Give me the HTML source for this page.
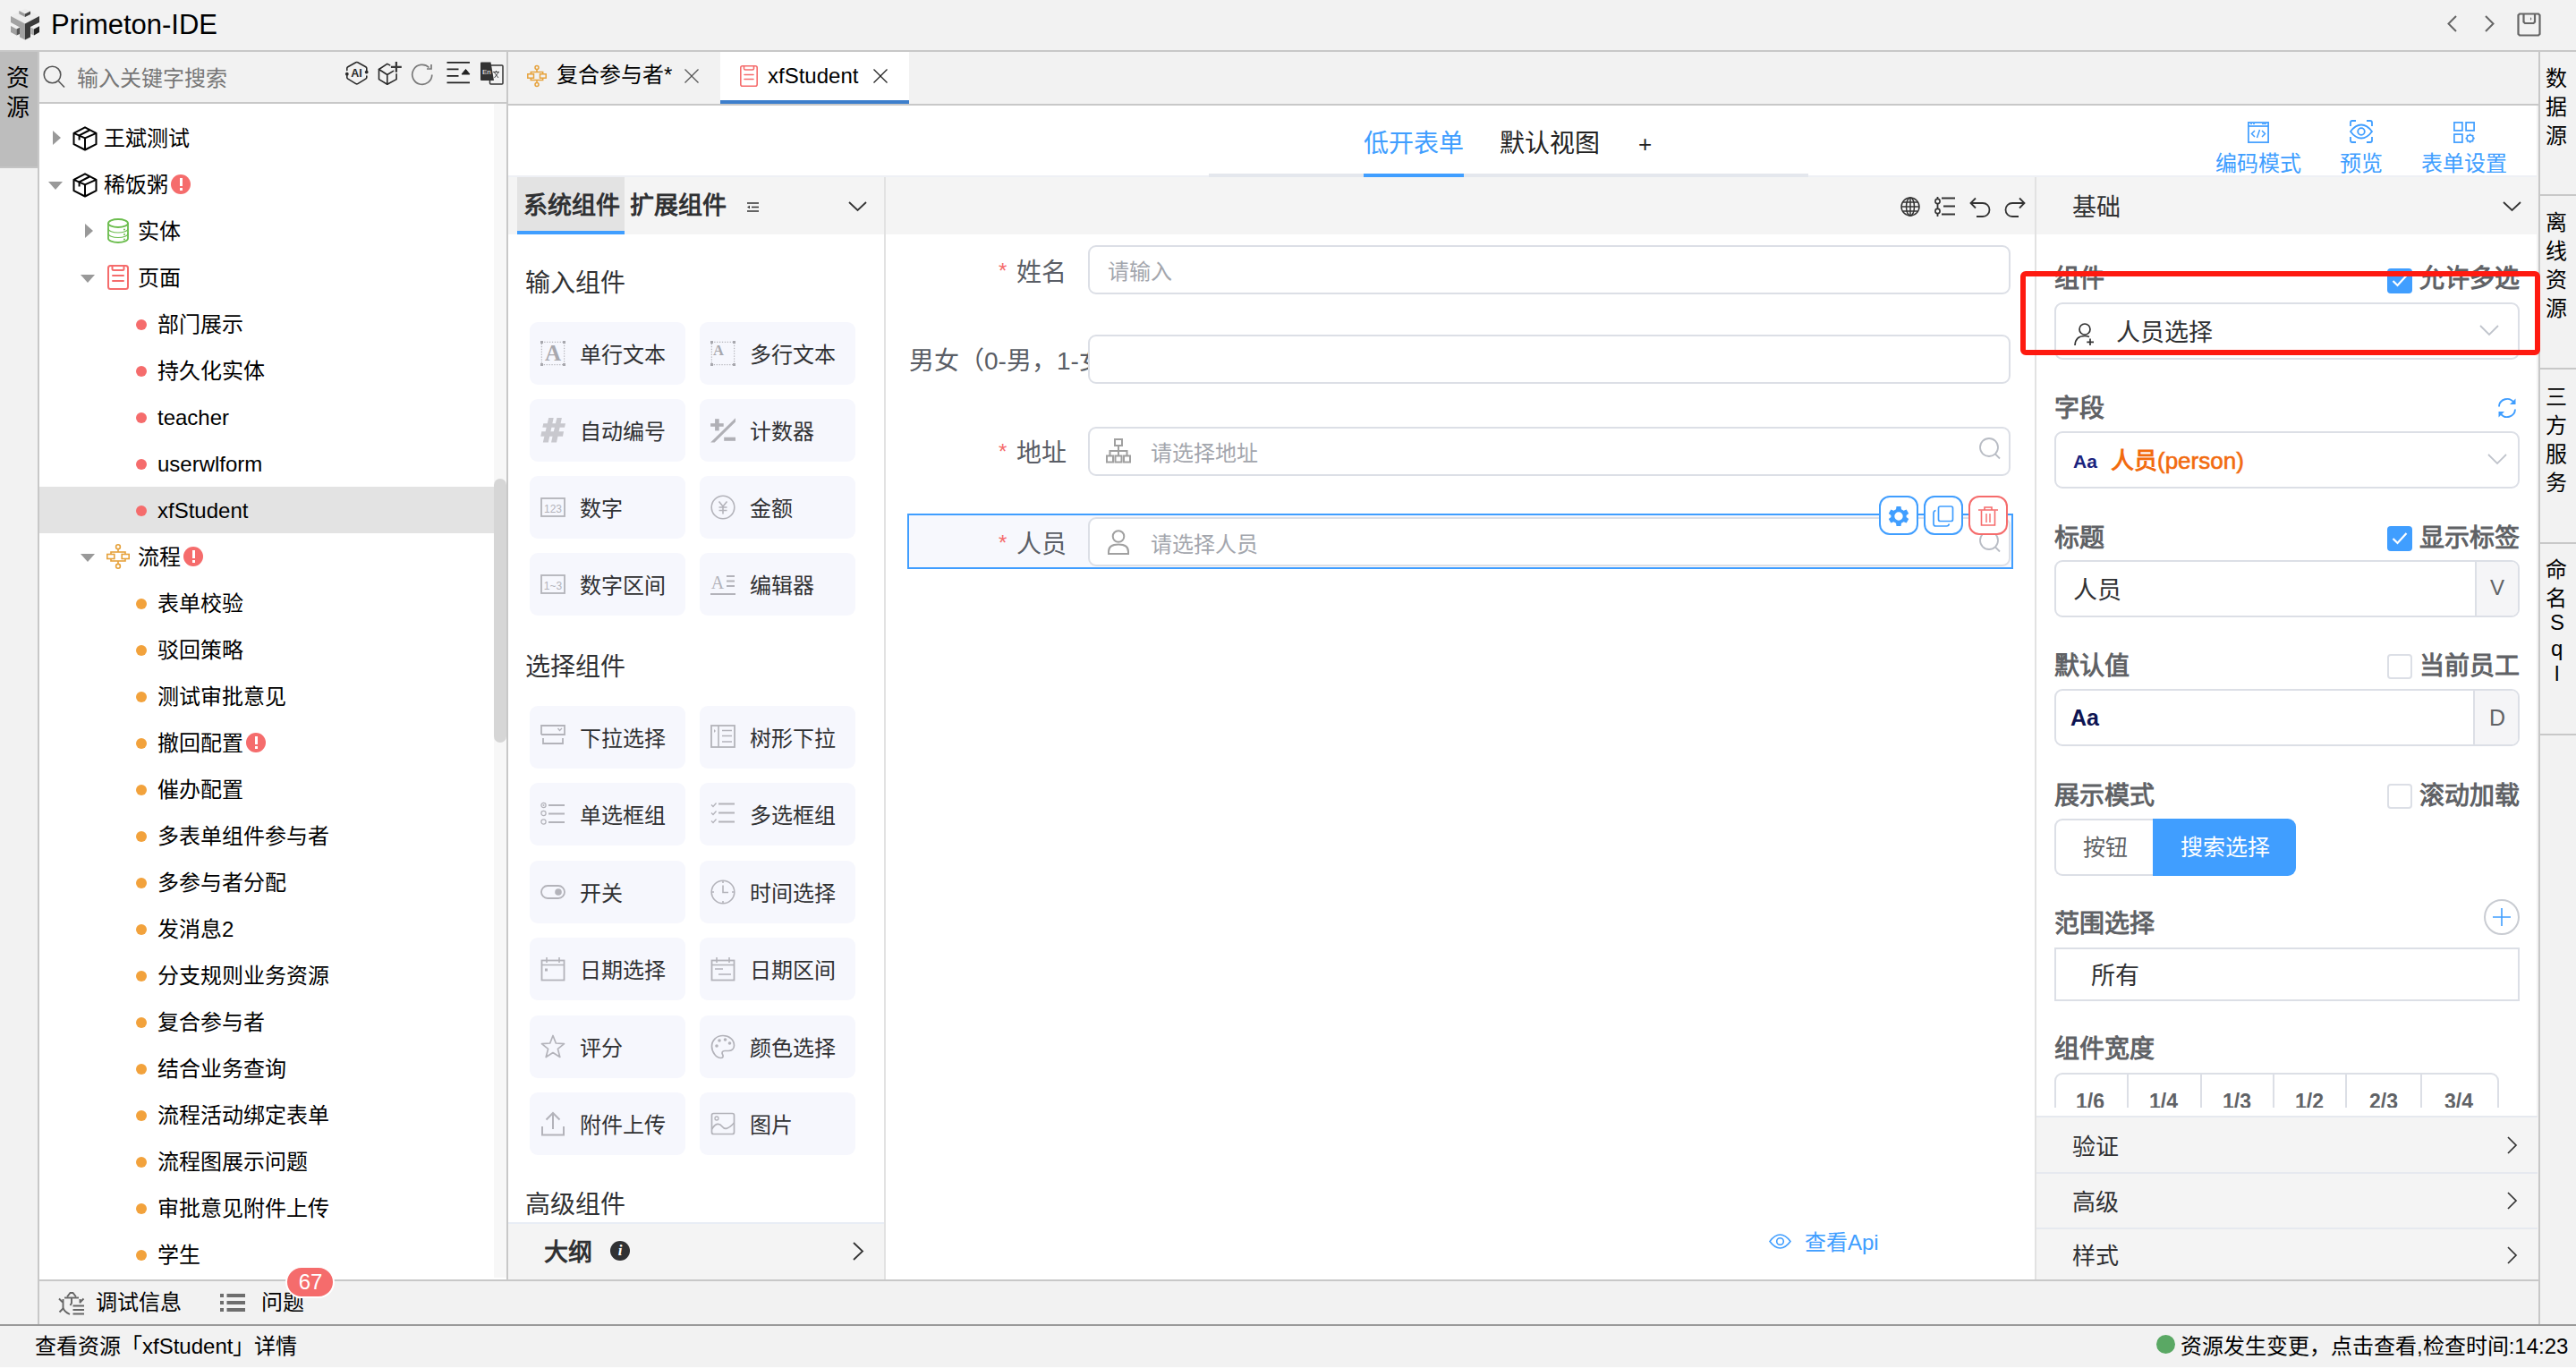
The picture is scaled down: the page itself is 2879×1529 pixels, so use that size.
<!DOCTYPE html>
<html lang="zh-CN"><head><meta charset="utf-8">
<style>
*{box-sizing:border-box;margin:0;padding:0}
html,body{width:2879px;height:1529px;overflow:hidden}
body{background:#f2f2f2;font-family:"Liberation Sans",sans-serif;position:relative;color:#000;font-size:24px}
.a{position:absolute}
.t{position:absolute;white-space:nowrap;line-height:1}
svg{position:absolute;overflow:visible}
</style></head><body>

<!-- ===== TITLE BAR ===== -->
<div class="a" style="left:0;top:0;width:2879px;height:56px;background:#f2f2f2"></div>
<div class="a" style="left:0;top:56px;width:2879px;height:2px;background:#c8c8c8"></div>

<!-- ===== LEFT STRIP ===== -->
<div class="a" style="left:0;top:58px;width:42px;height:1422px;background:#f2f2f2"></div>
<div class="a" style="left:0;top:58px;width:42px;height:128px;background:#bdbdbd"></div>
<div class="a" style="left:0;top:186px;width:42px;height:2px;background:#c4c4c4"></div>
<div class="a" style="left:42px;top:58px;width:2px;height:1422px;background:#c8c8c8"></div>

<!-- ===== LEFT PANEL ===== -->
<div class="a" style="left:44px;top:58px;width:522px;height:56px;background:#f2f2f2"></div>
<div class="a" style="left:44px;top:114px;width:522px;height:2px;background:#c8c8c8"></div>
<div class="a" style="left:44px;top:116px;width:522px;height:1314px;background:#fff"></div>
<div class="a" style="left:552px;top:116px;width:14px;height:1312px;background:#f7f7f7"></div>
<div class="a" style="left:552px;top:535px;width:14px;height:295px;background:#d6d6d6;border-radius:7px"></div>
<div class="a" style="left:566px;top:58px;width:2px;height:1372px;background:#c8c8c8"></div>

<!-- ===== EDITOR ===== -->
<div class="a" style="left:568px;top:58px;width:2269px;height:58px;background:#f2f2f2"></div>
<div class="a" style="left:568px;top:116px;width:2269px;height:2px;background:#c8c8c8"></div>
<div class="a" style="left:568px;top:118px;width:2267px;height:1312px;background:#fff"></div>

<!-- ===== RIGHT STRIP ===== -->
<div class="a" style="left:2837px;top:58px;width:2px;height:1422px;background:#c8c8c8"></div>
<div class="a" style="left:2839px;top:58px;width:40px;height:1422px;background:#f2f2f2"></div>

<!-- title content -->
<svg style="left:8px;top:5px" width="42" height="45" viewBox="0 0 42 45">
<polygon points="4,13 20,4.5 36,13 20,21.5" fill="#ededed"/>
<polygon points="13.3,7 20,10.5 20,14 13.3,10.5" fill="#9c9c9c"/>
<polygon points="20,10.5 26,7.5 26,11 20,14" fill="#444"/>
<polygon points="4,13 20,21.5 20,39.5 14,36.5 14,25.5 4,20" fill="#a2a2a2"/>
<polygon points="20,21.5 36,13 36,20 26,25 26,36.5 20,39.5" fill="#3b3b3b"/>
<polygon points="4,24 10.5,27.5 10.5,34.5 4,31" fill="#a0a0a0"/>
<polygon points="10.5,27.5 14,25.8 14,33 10.5,34.5" fill="#555"/>
<polygon points="26.5,25.5 30,27.5 30,34.5 26.5,33" fill="#aaa"/>
<polygon points="30,27.5 36,24.3 36,31 30,34.5" fill="#242424"/>
</svg>
<div class="t" style="left:57px;top:12px;font-size:31px;line-height:31px;color:#000">Primeton-IDE</div>
<svg style="left:2735px;top:17px" width="11" height="19"><path d="M10 1L1.5 9.5L10 18" fill="none" stroke="#666" stroke-width="2"/></svg>
<svg style="left:2777px;top:17px" width="11" height="19"><path d="M1 1L9.5 9.5L1 18" fill="none" stroke="#666" stroke-width="2"/></svg>
<svg style="left:2813px;top:14px" width="27" height="27" viewBox="0 0 27 27"><g fill="none" stroke="#666" stroke-width="2.2"><path d="M3 1.5H24L25.5 3V24L24 25.5H3L1.5 24V3Z"/><path d="M7.5 1.5V10.5L9 12H18.5L20 10.5V1.5"/></g><path d="M15 5L16.5 7L15 9Z" fill="#666"/></svg>

<!-- left strip -->
<div class="t" style="left:7px;top:71px;font-size:26px;line-height:33px;width:26px;white-space:normal;color:#000">资源</div>

<!-- search -->
<svg style="left:48px;top:73px" width="25" height="26" viewBox="0 0 25 26"><g fill="none" stroke="#555" stroke-width="1.6"><circle cx="10.5" cy="10.5" r="9.3"/><path d="M17.5 17.8L24 24.5"/></g></svg>
<div class="t" style="left:86px;top:60px;line-height:56px;font-size:24px;color:#777">输入关键字搜索</div>
<!-- AI -->
<svg style="left:386px;top:69px" width="26" height="26" viewBox="0 0 26 26"><g fill="none" stroke="#2a2a2a" stroke-width="1.6" stroke-linejoin="round" stroke-linecap="round"><path d="M1.8 9.6V7.3Q1.8 6.3 2.8 5.7L11.8 0.8Q12.8 0.3 13.8 0.8L22.8 5.7Q23.8 6.3 23.8 7.3V11.6"/><path d="M1.8 13.7V17.5Q1.8 18.5 2.8 19.1L11.8 24.6Q12.8 25.2 13.8 24.6L22.8 19.1Q23.8 18.5 23.8 17.5V16"/></g><circle cx="1.8" cy="13.7" r="1.9" fill="#2a2a2a"/><circle cx="23.7" cy="11.6" r="1.9" fill="#2a2a2a"/><text x="12.6" y="16.9" font-size="12.5" font-weight="700" text-anchor="middle" fill="#2a2a2a" font-family="Liberation Sans">AI</text></svg>
<!-- cube+ -->
<svg style="left:423px;top:69px" width="27" height="27" viewBox="0 0 27 27"><g fill="none" stroke="#2a2a2a" stroke-width="1.6" stroke-linejoin="round" stroke-linecap="round"><path d="M12.7 3.9L9.8 2.4L0.5 8.5V19.6L9.8 25.3L20.1 19.6V13.7"/><path d="M0.5 8.5L9.8 14.5L16.6 10.4M9.8 14.5V25.3"/></g><path d="M19.9 0V11.8M13.9 5.9H25.8" stroke="#3a3a3a" stroke-width="2.3"/></svg>
<!-- refresh -->
<svg style="left:460px;top:71px" width="24" height="25" viewBox="0 0 24 25"><g fill="none" stroke="#7a7a7a" stroke-width="1.7"><path d="M22.8 12.5A11 11 0 1 1 19.5 4.5"/><path d="M22 1V6H17"/></g></svg>
<!-- collapse -->
<svg style="left:499px;top:69px" width="27" height="26" viewBox="0 0 27 26"><g stroke="#222" stroke-width="1.8"><path d="M0.5 0.8H26M0.5 8.3H13.5M0.5 15.8H13.5M0.5 23.3H26"/></g><path d="M17 14H26L21.5 8.5Z" fill="#222" stroke="#222" stroke-width="1" stroke-linejoin="round"/></svg>
<!-- En 文 -->
<svg style="left:536px;top:69px" width="27" height="27" viewBox="0 0 27 27"><rect x="11.5" y="4" width="14.5" height="21" rx="1" fill="none" stroke="#333" stroke-width="1.5"/><path d="M1 1.5Q1 0.5 2 0.5H12.5L16 21H2Q1 21 1 20Z" fill="#333"/><text x="3" y="14" font-size="8" fill="#fff" font-family="Liberation Sans">En</text><path d="M15 11.5H22M18.5 10V11.5M16.5 12L21 18M21 12L16.5 18" stroke="#444" stroke-width="1" fill="none"/></svg>

<svg style="left:59px;top:146px" width="9" height="16"><path d="M0 0L9 8L0 16Z" fill="#999"/></svg>
<svg style="left:82px;top:141px" width="26" height="28" viewBox="0 0 26 28"><g fill="none" stroke="#000" stroke-width="2" stroke-linejoin="round"><path d="M13 1.3L25.5 7.8V20.2L13 26.5L0.5 20.2V7.8Z"/><path d="M0.5 7.8L13 13.4L25.5 7.8M13 13.4V26.5"/><path d="M6.6 15.5V10.3L18 4.5"/></g></svg>
<div class="t" style="left:116px;top:129px;line-height:52px;font-size:24px">王斌测试</div>
<svg style="left:54px;top:203px" width="16" height="9"><path d="M0 0L16 0L8 9Z" fill="#999"/></svg>
<svg style="left:82px;top:193px" width="26" height="28" viewBox="0 0 26 28"><g fill="none" stroke="#000" stroke-width="2" stroke-linejoin="round"><path d="M13 1.3L25.5 7.8V20.2L13 26.5L0.5 20.2V7.8Z"/><path d="M0.5 7.8L13 13.4L25.5 7.8M13 13.4V26.5"/><path d="M6.6 15.5V10.3L18 4.5"/></g></svg>
<div class="t" style="left:116px;top:181px;line-height:52px;font-size:24px">稀饭粥</div>
<div class="a" style="left:191px;top:195px;width:22px;height:22px;border-radius:11px;background:#f56c6c"></div><div class="a" style="left:200.5px;top:199px;width:3px;height:9px;background:#fff"></div><div class="a" style="left:200.5px;top:210px;width:3px;height:3px;background:#fff"></div>
<svg style="left:95px;top:250px" width="9" height="16"><path d="M0 0L9 8L0 16Z" fill="#999"/></svg>
<svg style="left:120px;top:244px" width="24" height="28" viewBox="0 0 24 28"><g fill="none" stroke="#6cbd4e" stroke-width="1.8"><ellipse cx="12" cy="5.5" rx="11" ry="4.5"/><path d="M1 5.5V22.5C1 25 6 27 12 27S23 25 23 22.5V5.5"/><path d="M1 11.5C1 14 6 16 12 16S23 14 23 11.5" stroke-width="1.2"/><path d="M1 17C1 19.5 6 21.5 12 21.5S23 19.5 23 17" stroke-width="1.2"/></g><g fill="#6cbd4e"><circle cx="19" cy="12.5" r="1"/><circle cx="19" cy="18" r="1"/><circle cx="19" cy="23.5" r="1"/></g></svg>
<div class="t" style="left:154px;top:233px;line-height:52px;font-size:24px">实体</div>
<svg style="left:90px;top:307px" width="16" height="9"><path d="M0 0L16 0L8 9Z" fill="#999"/></svg>
<svg style="left:120px;top:296px" width="24" height="28" viewBox="0 0 24 28"><g fill="none" stroke="#f56c6c" stroke-width="2" stroke-linecap="round"><rect x="1" y="1" width="22" height="26" rx="2.5"/><path d="M5.5 1.5V4.5Q5.5 6 7 6H17Q18.5 6 18.5 4.5V1.5"/><path d="M6 12H18M6 18H18"/></g></svg>
<div class="t" style="left:154px;top:285px;line-height:52px;font-size:24px">页面</div>
<div class="a" style="left:152px;top:357px;width:12px;height:12px;border-radius:6px;background:#f56c6c"></div>
<div class="t" style="left:176px;top:337px;line-height:52px;font-size:24px">部门展示</div>
<div class="a" style="left:152px;top:409px;width:12px;height:12px;border-radius:6px;background:#f56c6c"></div>
<div class="t" style="left:176px;top:389px;line-height:52px;font-size:24px">持久化实体</div>
<div class="a" style="left:152px;top:461px;width:12px;height:12px;border-radius:6px;background:#f56c6c"></div>
<div class="t" style="left:176px;top:441px;line-height:52px;font-size:24px">teacher</div>
<div class="a" style="left:152px;top:513px;width:12px;height:12px;border-radius:6px;background:#f56c6c"></div>
<div class="t" style="left:176px;top:493px;line-height:52px;font-size:24px">userwlform</div>
<div class="a" style="left:44px;top:544px;width:508px;height:52px;background:#e3e3e3"></div>
<div class="a" style="left:152px;top:565px;width:12px;height:12px;border-radius:6px;background:#f56c6c"></div>
<div class="t" style="left:176px;top:545px;line-height:52px;font-size:24px">xfStudent</div>
<svg style="left:90px;top:619px" width="16" height="9"><path d="M0 0L16 0L8 9Z" fill="#999"/></svg>
<svg style="left:119px;top:608px" width="26" height="28" viewBox="0 0 26 28"><g fill="none" stroke="#e6a23c" stroke-width="1.6"><circle cx="13" cy="3.2" r="2.4"/><circle cx="13" cy="24.8" r="2.4"/><path d="M13 5.6V9M13 19V22.4"/><rect x="5" y="9" width="16" height="10"/><rect x="0.8" y="11.5" width="8" height="5" fill="#fff"/><rect x="17.2" y="11.5" width="8" height="5" fill="#fff"/></g></svg>
<div class="t" style="left:154px;top:597px;line-height:52px;font-size:24px">流程</div>
<div class="a" style="left:205px;top:611px;width:22px;height:22px;border-radius:11px;background:#f56c6c"></div><div class="a" style="left:214.5px;top:615px;width:3px;height:9px;background:#fff"></div><div class="a" style="left:214.5px;top:626px;width:3px;height:3px;background:#fff"></div>
<div class="a" style="left:152px;top:669px;width:12px;height:12px;border-radius:6px;background:#f2a23c"></div>
<div class="t" style="left:176px;top:649px;line-height:52px;font-size:24px">表单校验</div>
<div class="a" style="left:152px;top:721px;width:12px;height:12px;border-radius:6px;background:#f2a23c"></div>
<div class="t" style="left:176px;top:701px;line-height:52px;font-size:24px">驳回策略</div>
<div class="a" style="left:152px;top:773px;width:12px;height:12px;border-radius:6px;background:#f2a23c"></div>
<div class="t" style="left:176px;top:753px;line-height:52px;font-size:24px">测试审批意见</div>
<div class="a" style="left:152px;top:825px;width:12px;height:12px;border-radius:6px;background:#f2a23c"></div>
<div class="t" style="left:176px;top:805px;line-height:52px;font-size:24px">撤回配置</div>
<div class="a" style="left:275px;top:819px;width:22px;height:22px;border-radius:11px;background:#f56c6c"></div><div class="a" style="left:284.5px;top:823px;width:3px;height:9px;background:#fff"></div><div class="a" style="left:284.5px;top:834px;width:3px;height:3px;background:#fff"></div>
<div class="a" style="left:152px;top:877px;width:12px;height:12px;border-radius:6px;background:#f2a23c"></div>
<div class="t" style="left:176px;top:857px;line-height:52px;font-size:24px">催办配置</div>
<div class="a" style="left:152px;top:929px;width:12px;height:12px;border-radius:6px;background:#f2a23c"></div>
<div class="t" style="left:176px;top:909px;line-height:52px;font-size:24px">多表单组件参与者</div>
<div class="a" style="left:152px;top:981px;width:12px;height:12px;border-radius:6px;background:#f2a23c"></div>
<div class="t" style="left:176px;top:961px;line-height:52px;font-size:24px">多参与者分配</div>
<div class="a" style="left:152px;top:1033px;width:12px;height:12px;border-radius:6px;background:#f2a23c"></div>
<div class="t" style="left:176px;top:1013px;line-height:52px;font-size:24px">发消息2</div>
<div class="a" style="left:152px;top:1085px;width:12px;height:12px;border-radius:6px;background:#f2a23c"></div>
<div class="t" style="left:176px;top:1065px;line-height:52px;font-size:24px">分支规则业务资源</div>
<div class="a" style="left:152px;top:1137px;width:12px;height:12px;border-radius:6px;background:#f2a23c"></div>
<div class="t" style="left:176px;top:1117px;line-height:52px;font-size:24px">复合参与者</div>
<div class="a" style="left:152px;top:1189px;width:12px;height:12px;border-radius:6px;background:#f2a23c"></div>
<div class="t" style="left:176px;top:1169px;line-height:52px;font-size:24px">结合业务查询</div>
<div class="a" style="left:152px;top:1241px;width:12px;height:12px;border-radius:6px;background:#f2a23c"></div>
<div class="t" style="left:176px;top:1221px;line-height:52px;font-size:24px">流程活动绑定表单</div>
<div class="a" style="left:152px;top:1293px;width:12px;height:12px;border-radius:6px;background:#f2a23c"></div>
<div class="t" style="left:176px;top:1273px;line-height:52px;font-size:24px">流程图展示问题</div>
<div class="a" style="left:152px;top:1345px;width:12px;height:12px;border-radius:6px;background:#f2a23c"></div>
<div class="t" style="left:176px;top:1325px;line-height:52px;font-size:24px">审批意见附件上传</div>
<div class="a" style="left:152px;top:1397px;width:12px;height:12px;border-radius:6px;background:#f2a23c"></div>
<div class="t" style="left:176px;top:1377px;line-height:52px;font-size:24px">学生</div>
<!-- ===== EDITOR TABS ===== -->
<svg style="left:589px;top:73px" width="22" height="24" viewBox="0 0 22 24"><g fill="none" stroke="#e6a23c" stroke-width="1.5"><circle cx="11" cy="2.6" r="2"/><circle cx="11" cy="21.4" r="2"/><path d="M11 4.6V7.5M11 16.5V19.4"/><rect x="4.3" y="7.5" width="13.4" height="9"/><rect x="0.8" y="9.8" width="6.7" height="4.4" fill="#f2f2f2"/><rect x="14.5" y="9.8" width="6.7" height="4.4" fill="#f2f2f2"/></g></svg>
<div class="t" style="left:622px;top:55px;line-height:58px;font-size:24px">复合参与者*</div>
<svg style="left:765px;top:77px" width="16" height="16"><path d="M0.5 0.5L15.5 15.5M15.5 0.5L0.5 15.5" stroke="#555" stroke-width="1.3"/></svg>
<div class="a" style="left:805px;top:58px;width:211px;height:58px;background:#fff"></div>
<div class="a" style="left:805px;top:112px;width:211px;height:4px;background:#3d7fcc"></div>
<svg style="left:827px;top:73px" width="20" height="24" viewBox="0 0 20 24"><g fill="none" stroke="#f56c6c" stroke-width="1.6" stroke-linecap="round"><rect x="0.8" y="0.8" width="18.4" height="22.4" rx="2"/><path d="M4.5 1V3.5Q4.5 5 6 5H14Q15.5 5 15.5 3.5V1"/><path d="M5 10.5H15M5 15.5H15"/></g></svg>
<div class="t" style="left:858px;top:57px;line-height:56px;font-size:24px">xfStudent</div>
<svg style="left:976px;top:77px" width="16" height="16"><path d="M0.5 0.5L15.5 15.5M15.5 0.5L0.5 15.5" stroke="#222" stroke-width="1.3"/></svg>

<!-- ===== DESIGNER TOP ===== -->
<div class="t" style="left:1524px;top:141px;font-size:28px;line-height:40px;color:#409eff">低开表单</div>
<div class="t" style="left:1676px;top:141px;font-size:28px;line-height:40px;color:#222">默认视图</div>
<div class="t" style="left:1831px;top:143px;font-size:26px;line-height:36px;color:#222">+</div>

<!-- toolbar right -->
<svg style="left:2512px;top:136px" width="24" height="24" viewBox="0 0 24 24"><g fill="none" stroke="#409eff" stroke-width="1.7"><rect x="0.9" y="0.9" width="22.2" height="22.2"/><path d="M1 5H23"/><path d="M8 10L4.5 13.5L8 17M16 10L19.5 13.5L16 17M13.5 9L10.5 18" stroke-width="1.5"/></g><path d="M3 2.5H5M6 2.5H8M16 2.5H21" stroke="#409eff" stroke-width="1.2"/></svg>
<div class="t" style="left:2476px;top:169px;font-size:24px;line-height:28px;color:#409eff">编码模式</div>
<svg style="left:2626px;top:134px" width="26" height="26" viewBox="0 0 26 26"><g fill="none" stroke="#409eff" stroke-width="1.8"><path d="M1 7V3Q1 1 3 1H7M19 1H23Q25 1 25 3V7M25 19V23Q25 25 23 25H19M7 25H3Q1 25 1 23V19"/><path d="M1 13Q6.5 5.5 13 5.5T25 13Q19.5 20.5 13 20.5T1 13Z"/><circle cx="13" cy="13" r="3.8"/></g></svg>
<div class="t" style="left:2615px;top:169px;font-size:24px;line-height:28px;color:#409eff">预览</div>
<svg style="left:2742px;top:136px" width="24" height="24" viewBox="0 0 24 24"><g fill="none" stroke="#409eff" stroke-width="1.7"><rect x="0.9" y="0.9" width="9" height="9"/><rect x="14.1" y="0.9" width="9" height="9"/><rect x="0.9" y="14.1" width="9" height="9"/><circle cx="18.6" cy="18.6" r="3.6"/></g><path d="M18.6 13.5V15M18.6 22.2V23.7M13.5 18.6H15M22.2 18.6H23.7M15 15L16 16M21.2 21.2L22.2 22.2M15 22.2L16 21.2M21.2 16L22.2 15" stroke="#409eff" stroke-width="1.6"/></svg>
<div class="t" style="left:2706px;top:169px;font-size:24px;line-height:28px;color:#409eff">表单设置</div>

<!-- ===== COMPONENT PANEL HEADER ===== -->
<div class="a" style="left:568px;top:198px;width:2267px;height:64px;background:#f4f4f4"></div>
<div class="a" style="left:568px;top:196px;width:2267px;height:2px;background:#eef0f5"></div>
<div class="a" style="left:1351px;top:194px;width:670px;height:4px;background:#e4e7ed"></div>
<div class="a" style="left:1524px;top:194px;width:112px;height:4px;background:#409eff"></div>
<div class="a" style="left:578px;top:198px;width:120px;height:60px;background:#e3e3e3"></div>
<div class="a" style="left:578px;top:258px;width:120px;height:4px;background:#409eff"></div>
<div class="t" style="left:585px;top:214px;font-size:27px;line-height:32px;font-weight:700;color:#303133">系统组件</div>
<div class="t" style="left:704px;top:214px;font-size:27px;line-height:32px;font-weight:700;color:#303133">扩展组件</div>
<svg style="left:835px;top:226px" width="13" height="11" viewBox="0 0 13 11"><path d="M0 1H13M5 5.5H13M0 10H13" stroke="#333" stroke-width="1.6"/><path d="M0 5.5L3 3.8V7.2Z" fill="#333"/></svg>
<svg style="left:948px;top:225px" width="21" height="11"><path d="M1 1L10.5 10L20 1" fill="none" stroke="#333" stroke-width="1.8"/></svg>
<div class="a" style="left:988px;top:198px;width:2px;height:1232px;background:#e2e2e2"></div>

<!-- canvas toolbar -->
<svg style="left:2124px;top:220px" width="22" height="22" viewBox="0 0 22 22"><g fill="none" stroke="#333" stroke-width="1.5"><circle cx="11" cy="11" r="10"/><ellipse cx="11" cy="11" rx="4.5" ry="10"/><path d="M11 1V21M1 11H21M2.5 6H19.5M2.5 16H19.5"/></g></svg>
<svg style="left:2162px;top:219px" width="24" height="24" viewBox="0 0 24 24"><g fill="none" stroke="#333" stroke-width="1.8"><path d="M8 2.5H23M10 11.5H23M8 20.5H23"/><path d="M3.5 1V23"/></g><circle cx="3.5" cy="6" r="2.6" fill="#fff" stroke="#333" stroke-width="1.6"/><circle cx="3.5" cy="17" r="2.6" fill="#fff" stroke="#333" stroke-width="1.6"/></svg>
<svg style="left:2201px;top:219px" width="24" height="24" viewBox="0 0 24 24"><g fill="none" stroke="#333" stroke-width="1.8"><path d="M2 8H15A7.5 7.5 0 0 1 15 23H8"/><path d="M7 2.5L1.5 8L7 13.5"/></g></svg>
<svg style="left:2240px;top:219px" width="24" height="24" viewBox="0 0 24 24"><g fill="none" stroke="#333" stroke-width="1.8"><path d="M22 8H9A7.5 7.5 0 0 0 9 23H16"/><path d="M17 2.5L22.5 8L17 13.5"/></g></svg>
<div class="a" style="left:2274px;top:198px;width:2px;height:1232px;background:#e2e2e2"></div>

<!-- properties header -->
<div class="t" style="left:2316px;top:216px;font-size:27px;line-height:32px;color:#303133">基础</div>
<svg style="left:2797px;top:225px" width="21" height="11"><path d="M1 1L10.5 10L20 1" fill="none" stroke="#333" stroke-width="1.8"/></svg>

<!-- ===== COMPONENT PANEL CONTENT ===== -->
<div class="t" style="left:587px;top:299px;font-size:28px;line-height:36px;color:#303133">输入组件</div>
<div class="t" style="left:587px;top:728px;font-size:28px;line-height:36px;color:#303133">选择组件</div>
<div class="a" style="left:592px;top:360px;width:174px;height:70px;background:#f6f7fd;border-radius:9px"></div>
<svg style="left:604px;top:381px" width="28" height="28" viewBox="0 0 28 28"><path d="M1.3 1.3H26.7V26.7H1.3Z" fill="none" stroke="#a8a8ae" stroke-width="1" stroke-dasharray="1.3 1.6"/><rect x="0" y="0" width="3" height="3" fill="#a8a8ae"/><rect x="25" y="0" width="3" height="3" fill="#a8a8ae"/><rect x="0" y="25" width="3" height="3" fill="#a8a8ae"/><rect x="25" y="25" width="3" height="3" fill="#a8a8ae"/><text x="14" y="22" font-size="25" font-weight="700" text-anchor="middle" fill="#a8a8ae" font-family="Liberation Serif">A</text></svg>
<div class="t" style="left:648px;top:362px;line-height:70px;font-size:24px;color:#303133">单行文本</div>
<div class="a" style="left:782px;top:360px;width:174px;height:70px;background:#f6f7fd;border-radius:9px"></div>
<svg style="left:794px;top:381px" width="28" height="28" viewBox="0 0 28 28"><path d="M1.3 1.3H26.7V26.7H1.3Z" fill="none" stroke="#a8a8ae" stroke-width="1" stroke-dasharray="1.3 1.6"/><rect x="0" y="0" width="3" height="3" fill="#a8a8ae"/><rect x="25" y="0" width="3" height="3" fill="#a8a8ae"/><rect x="0" y="25" width="3" height="3" fill="#a8a8ae"/><rect x="25" y="25" width="3" height="3" fill="#a8a8ae"/><text x="9" y="16" font-size="16.5" font-weight="700" text-anchor="middle" fill="#a8a8ae" font-family="Liberation Serif">A</text></svg>
<div class="t" style="left:838px;top:362px;line-height:70px;font-size:24px;color:#303133">多行文本</div>
<div class="a" style="left:592px;top:446px;width:174px;height:70px;background:#f6f7fd;border-radius:9px"></div>
<svg style="left:604px;top:467px" width="28" height="28" viewBox="0 0 28 28"><g fill="#c8c8ce"><path d="M9.2 0H14.7L8.8 27.6H2.8Z"/><path d="M18.4 0H23.9L18 27.6H12Z"/><path d="M3.3 6.2H28L27 10.7H2.3Z"/><path d="M1.3 15.3H26L25 20.8H0.3Z"/></g></svg>
<div class="t" style="left:648px;top:448px;line-height:70px;font-size:24px;color:#303133">自动编号</div>
<div class="a" style="left:782px;top:446px;width:174px;height:70px;background:#f6f7fd;border-radius:9px"></div>
<svg style="left:794px;top:467px" width="28" height="28" viewBox="0 0 28 28"><g fill="#b0b0b6"><rect x="0.1" y="6.2" width="14.6" height="3.6"/><rect x="5.1" y="1.2" width="4.6" height="13.2"/><path d="M0.1 27.6H4.6L28 4.6V0.2Z"/><rect x="15.2" y="21.7" width="12.8" height="4.1"/></g></svg>
<div class="t" style="left:838px;top:448px;line-height:70px;font-size:24px;color:#303133">计数器</div>
<div class="a" style="left:592px;top:532px;width:174px;height:70px;background:#f6f7fd;border-radius:9px"></div>
<svg style="left:604px;top:553px" width="28" height="28" viewBox="0 0 28 28"><rect x="1" y="4" width="26" height="20" fill="none" stroke="#b3b3ba" stroke-width="1.8"/><text x="14" y="19.5" font-size="12" text-anchor="middle" fill="#b3b3ba" font-family="Liberation Sans">123</text></svg>
<div class="t" style="left:648px;top:534px;line-height:70px;font-size:24px;color:#303133">数字</div>
<div class="a" style="left:782px;top:532px;width:174px;height:70px;background:#f6f7fd;border-radius:9px"></div>
<svg style="left:794px;top:553px" width="28" height="28" viewBox="0 0 28 28"><circle cx="14" cy="14" r="12.8" fill="none" stroke="#b3b3ba" stroke-width="1.6"/><path d="M9.5 7.5L14 13L18.5 7.5M14 13V21.5M9.5 14H18.5M9.5 17.5H18.5" stroke="#b3b3ba" stroke-width="1.6" fill="none"/></svg>
<div class="t" style="left:838px;top:534px;line-height:70px;font-size:24px;color:#303133">金额</div>
<div class="a" style="left:592px;top:618px;width:174px;height:70px;background:#f6f7fd;border-radius:9px"></div>
<svg style="left:604px;top:639px" width="28" height="28" viewBox="0 0 28 28"><rect x="1" y="4" width="26" height="20" fill="none" stroke="#b3b3ba" stroke-width="1.8"/><text x="14" y="19.5" font-size="12" text-anchor="middle" fill="#b3b3ba" font-family="Liberation Sans">1~3</text></svg>
<div class="t" style="left:648px;top:620px;line-height:70px;font-size:24px;color:#303133">数字区间</div>
<div class="a" style="left:782px;top:618px;width:174px;height:70px;background:#f6f7fd;border-radius:9px"></div>
<svg style="left:794px;top:639px" width="28" height="28" viewBox="0 0 28 28"><text x="8" y="19" font-size="20" text-anchor="middle" fill="#b3b3ba" font-family="Liberation Serif">A</text><path d="M18 5H27M18 10.5H27M18 16H27M0 25H28" stroke="#b3b3ba" stroke-width="2.2"/></svg>
<div class="t" style="left:838px;top:620px;line-height:70px;font-size:24px;color:#303133">编辑器</div>
<div class="a" style="left:592px;top:789px;width:174px;height:70px;background:#f6f7fd;border-radius:9px"></div>
<svg style="left:604px;top:810px" width="28" height="28" viewBox="0 0 28 28"><path d="M1 11V1H27V11H1" fill="none" stroke="#b3b3ba" stroke-width="1.8"/><path d="M19.5 4L21.5 6.5L24 4" stroke="#b3b3ba" stroke-width="1.3" fill="none"/><path d="M3 15V21H25V15" fill="none" stroke="#b3b3ba" stroke-width="1.8"/></svg>
<div class="t" style="left:648px;top:791px;line-height:70px;font-size:24px;color:#303133">下拉选择</div>
<div class="a" style="left:782px;top:789px;width:174px;height:70px;background:#f6f7fd;border-radius:9px"></div>
<svg style="left:794px;top:810px" width="28" height="28" viewBox="0 0 28 28"><rect x="1" y="1" width="26" height="24" fill="none" stroke="#b3b3ba" stroke-width="1.8"/><path d="M9 1V25M13 6.5H24M13 12.5H24M13 19H24" stroke="#b3b3ba" stroke-width="1.6"/><path d="M4 5L6 7L4 9Z" fill="#b3b3ba"/></svg>
<div class="t" style="left:838px;top:791px;line-height:70px;font-size:24px;color:#303133">树形下拉</div>
<div class="a" style="left:592px;top:875px;width:174px;height:70px;background:#f6f7fd;border-radius:9px"></div>
<svg style="left:604px;top:896px" width="28" height="28" viewBox="0 0 28 28"><circle cx="3.5" cy="4" r="2.6" fill="none" stroke="#b3b3ba" stroke-width="1.2"/><circle cx="3.5" cy="4" r="1" fill="#b3b3ba"/><circle cx="3.5" cy="13" r="2.6" fill="none" stroke="#b3b3ba" stroke-width="1.2"/><circle cx="3.5" cy="22.5" r="2.6" fill="none" stroke="#b3b3ba" stroke-width="1.2"/><path d="M9 4H27M9 13.5H27M9 23H27" stroke="#b3b3ba" stroke-width="2"/></svg>
<div class="t" style="left:648px;top:877px;line-height:70px;font-size:24px;color:#303133">单选框组</div>
<div class="a" style="left:782px;top:875px;width:174px;height:70px;background:#f6f7fd;border-radius:9px"></div>
<svg style="left:794px;top:896px" width="28" height="28" viewBox="0 0 28 28"><path d="M1 3.5L3 5.5L6.5 1.5M1 12.5L3 14.5L6.5 10.5M1 21.5L3 23.5L6.5 19.5" stroke="#b3b3ba" stroke-width="1.3" fill="none"/><path d="M9 2.5H27M9 12.5H27M9 22.5H27" stroke="#b3b3ba" stroke-width="2"/></svg>
<div class="t" style="left:838px;top:877px;line-height:70px;font-size:24px;color:#303133">多选框组</div>
<div class="a" style="left:592px;top:962px;width:174px;height:70px;background:#f6f7fd;border-radius:9px"></div>
<svg style="left:604px;top:983px" width="28" height="28" viewBox="0 0 28 28"><rect x="1" y="7" width="26" height="14" rx="7" fill="none" stroke="#b3b3ba" stroke-width="1.8"/><circle cx="20" cy="14" r="3.8" fill="#b3b3ba"/></svg>
<div class="t" style="left:648px;top:964px;line-height:70px;font-size:24px;color:#303133">开关</div>
<div class="a" style="left:782px;top:962px;width:174px;height:70px;background:#f6f7fd;border-radius:9px"></div>
<svg style="left:794px;top:983px" width="28" height="28" viewBox="0 0 28 28"><circle cx="14" cy="14" r="12.8" fill="none" stroke="#b3b3ba" stroke-width="1.6"/><path d="M14 6.5V14.5H20M14 1.5V4M14 24V26.5M1.5 14H4M24 14H26.5" stroke="#b3b3ba" stroke-width="1.6" fill="none"/></svg>
<div class="t" style="left:838px;top:964px;line-height:70px;font-size:24px;color:#303133">时间选择</div>
<div class="a" style="left:592px;top:1048px;width:174px;height:70px;background:#f6f7fd;border-radius:9px"></div>
<svg style="left:604px;top:1069px" width="28" height="28" viewBox="0 0 28 28"><rect x="1.5" y="4.5" width="25" height="22" fill="none" stroke="#b3b3ba" stroke-width="1.8"/><path d="M1.5 9.5H26.5M7 1V7M21 1V7" stroke="#b3b3ba" stroke-width="1.6"/><rect x="5" y="13.5" width="3" height="3" fill="#b3b3ba"/></svg>
<div class="t" style="left:648px;top:1050px;line-height:70px;font-size:24px;color:#303133">日期选择</div>
<div class="a" style="left:782px;top:1048px;width:174px;height:70px;background:#f6f7fd;border-radius:9px"></div>
<svg style="left:794px;top:1069px" width="28" height="28" viewBox="0 0 28 28"><rect x="1.5" y="4.5" width="25" height="22" fill="none" stroke="#b3b3ba" stroke-width="1.8"/><path d="M1.5 9.5H26.5M7 1V7M21 1V7M5 14H14M9 20H23" stroke="#b3b3ba" stroke-width="1.6"/></svg>
<div class="t" style="left:838px;top:1050px;line-height:70px;font-size:24px;color:#303133">日期区间</div>
<div class="a" style="left:592px;top:1135px;width:174px;height:70px;background:#f6f7fd;border-radius:9px"></div>
<svg style="left:604px;top:1156px" width="28" height="28" viewBox="0 0 28 28"><path d="M14 1.5L17.3 10L26.5 10.6L19.4 16.4L21.8 25.5L14 20.5L6.2 25.5L8.6 16.4L1.5 10.6L10.7 10Z" fill="none" stroke="#b3b3ba" stroke-width="1.7" stroke-linejoin="round"/></svg>
<div class="t" style="left:648px;top:1137px;line-height:70px;font-size:24px;color:#303133">评分</div>
<div class="a" style="left:782px;top:1135px;width:174px;height:70px;background:#f6f7fd;border-radius:9px"></div>
<svg style="left:794px;top:1156px" width="28" height="28" viewBox="0 0 28 28"><path d="M14 1.5C6.5 1.5 1.5 7 1.5 13.5S6.5 26.5 12 26.5C14.5 26.5 14.5 24 13.5 22.5S13 18.5 16 18.5H20C24 18.5 26.5 16 26.5 12.5C26.5 6 21 1.5 14 1.5Z" fill="none" stroke="#b3b3ba" stroke-width="1.7"/><circle cx="7" cy="13" r="1.8" fill="#b3b3ba"/><circle cx="10" cy="7" r="1.8" fill="#b3b3ba"/><circle cx="16.5" cy="6" r="1.8" fill="#b3b3ba"/><circle cx="21.5" cy="10" r="1.8" fill="#b3b3ba"/></svg>
<div class="t" style="left:838px;top:1137px;line-height:70px;font-size:24px;color:#303133">颜色选择</div>
<div class="a" style="left:592px;top:1221px;width:174px;height:70px;background:#f6f7fd;border-radius:9px"></div>
<svg style="left:604px;top:1242px" width="28" height="28" viewBox="0 0 28 28"><path d="M2 17V26.5H26V17M14 2V20M6.5 9.5L14 2L21.5 9.5" fill="none" stroke="#b3b3ba" stroke-width="2"/></svg>
<div class="t" style="left:648px;top:1223px;line-height:70px;font-size:24px;color:#303133">附件上传</div>
<div class="a" style="left:782px;top:1221px;width:174px;height:70px;background:#f6f7fd;border-radius:9px"></div>
<svg style="left:794px;top:1242px" width="28" height="28" viewBox="0 0 28 28"><rect x="1.5" y="2.5" width="25" height="23" rx="2" fill="none" stroke="#b3b3ba" stroke-width="1.7"/><circle cx="7" cy="8" r="2" fill="none" stroke="#b3b3ba" stroke-width="1.3"/><path d="M1.5 20C6 13 10 13 13 17S20 20 26.5 13" fill="none" stroke="#b3b3ba" stroke-width="1.7"/></svg>
<div class="t" style="left:838px;top:1223px;line-height:70px;font-size:24px;color:#303133">图片</div>
<div class="t" style="left:587px;top:1329px;font-size:28px;line-height:36px;color:#303133">高级组件</div>
<div class="a" style="left:568px;top:1366px;width:420px;height:2px;background:#e8edf5"></div>
<div class="a" style="left:568px;top:1368px;width:420px;height:62px;background:#f4f4f4"></div>
<div class="t" style="left:608px;top:1382px;font-size:27px;line-height:36px;font-weight:700;color:#303133">大纲</div>
<div class="a" style="left:682px;top:1387px;width:22px;height:22px;border-radius:11px;background:#303133"></div><div class="t" style="left:682px;top:1387px;width:22px;text-align:center;font-size:17px;line-height:22px;font-weight:700;font-style:italic;color:#fff;font-family:'Liberation Serif'">i</div>
<svg style="left:953px;top:1388px" width="12" height="21"><path d="M1 1L11 10.5L1 20" fill="none" stroke="#333" stroke-width="1.8"/></svg>
<!-- ===== CANVAS CONTENT ===== -->
<!-- item1 -->
<div class="t" style="left:1116px;top:291px;font-size:24px;line-height:24px;color:#f56c6c">*</div>
<div class="t" style="left:1136px;top:287px;font-size:28px;line-height:36px;color:#5a5e66">姓名</div>
<div class="a" style="left:1216px;top:274px;width:1031px;height:55px;border:2px solid #dcdfe6;border-radius:9px;background:#fff"></div>
<div class="t" style="left:1238px;top:288px;font-size:24px;line-height:32px;color:#a3a6ad">请输入</div>
<!-- item2 -->
<div class="a" style="left:1014px;top:380px;width:202px;height:50px;overflow:hidden"><div class="t" style="left:2px;top:6px;font-size:28px;line-height:36px;color:#5a5e66">男女（0-男，1-女）</div></div>
<div class="a" style="left:1216px;top:374px;width:1031px;height:55px;border:2px solid #dcdfe6;border-radius:9px;background:#fff"></div>
<!-- item3 -->
<div class="t" style="left:1116px;top:493px;font-size:24px;line-height:24px;color:#f56c6c">*</div>
<div class="t" style="left:1136px;top:489px;font-size:28px;line-height:36px;color:#5a5e66">地址</div>
<div class="a" style="left:1216px;top:477px;width:1031px;height:55px;border:2px solid #dcdfe6;border-radius:9px;background:#fff"></div>
<svg style="left:1236px;top:490px" width="28" height="28" viewBox="0 0 28 28"><g fill="none" stroke="#a0a0a0" stroke-width="2"><rect x="10" y="1" width="8" height="7"/><rect x="1" y="19.5" width="7" height="7"/><rect x="10.5" y="19.5" width="7" height="7"/><rect x="20" y="19.5" width="7" height="7"/><path d="M14 8V19.5M4.5 19.5V14H23.5V19.5"/></g></svg>
<div class="t" style="left:1286px;top:491px;font-size:24px;line-height:32px;color:#a3a6ad">请选择地址</div>
<svg style="left:2212px;top:489px" width="24" height="25" viewBox="0 0 24 25"><g fill="none" stroke="#b8bcc4" stroke-width="1.8"><circle cx="11" cy="11" r="10"/><path d="M18 18.5L23 23.5"/></g></svg>
<!-- item4 selected -->
<div class="a" style="left:1014px;top:574px;width:1236px;height:62px;border:2px solid #409eff;background:#f7f8fd"></div>
<div class="t" style="left:1116px;top:595px;font-size:24px;line-height:24px;color:#f56c6c">*</div>
<div class="t" style="left:1136px;top:591px;font-size:28px;line-height:36px;color:#5a5e66">人员</div>
<div class="a" style="left:1216px;top:578px;width:1031px;height:55px;border:2px solid #dcdfe6;border-radius:9px;background:#fff"></div>
<svg style="left:1238px;top:592px" width="24" height="28" viewBox="0 0 24 28"><g fill="none" stroke="#a0a0a0" stroke-width="2"><circle cx="12" cy="7.5" r="6.3"/><path d="M1 27V24.5Q1 16.5 12 16.5T23 24.5V27Z"/></g></svg>
<div class="t" style="left:1286px;top:593px;font-size:24px;line-height:32px;color:#a3a6ad">请选择人员</div>
<svg style="left:2212px;top:593px" width="24" height="25" viewBox="0 0 24 25"><g fill="none" stroke="#b8bcc4" stroke-width="1.8"><circle cx="11" cy="11" r="10"/><path d="M18 18.5L23 23.5"/></g></svg>
<!-- action buttons -->
<div class="a" style="left:2100px;top:554px;width:44px;height:44px;border:2px solid #409eff;border-radius:12px;background:#fff"></div>
<svg style="left:2110px;top:565px" width="24" height="24" viewBox="0 0 24 24"><path fill="#409eff" fill-rule="evenodd" d="M9.5 1H14.5L15 4.3L17.6 5.8L20.7 4.6L23.2 8.9L20.6 11V13L23.2 15.1L20.7 19.4L17.6 18.2L15 19.7L14.5 23H9.5L9 19.7L6.4 18.2L3.3 19.4L0.8 15.1L3.4 13V11L0.8 8.9L3.3 4.6L6.4 5.8L9 4.3Z M12 7.3A4.7 4.7 0 1 0 12 16.7A4.7 4.7 0 1 0 12 7.3Z"/></svg>
<div class="a" style="left:2150px;top:554px;width:44px;height:44px;border:2px solid #409eff;border-radius:12px;background:#fff"></div>
<svg style="left:2160px;top:565px" width="24" height="24" viewBox="0 0 24 24"><g fill="none" stroke="#409eff" stroke-width="1.7"><rect x="6.5" y="1" width="16" height="16.5" rx="2"/><path d="M3.5 5.5Q1 6 1 8.5V20.5Q1 23 3.5 23H15.5Q18 23 18.3 20.5"/></g></svg>
<div class="a" style="left:2200px;top:554px;width:44px;height:44px;border:2px solid #f56c6c;border-radius:12px;background:#fff"></div>
<svg style="left:2210px;top:565px" width="24" height="24" viewBox="0 0 24 24"><g fill="none" stroke="#f56c6c" stroke-width="1.6"><path d="M1 5H23M8 5V2H16V5"/><path d="M4.5 5.5V22H19.5V5.5"/><path d="M10 9V19M14 9V19" stroke-width="1.4"/></g></svg>
<!-- api link -->
<svg style="left:1977px;top:1379px" width="25" height="17" viewBox="0 0 25 17"><g fill="none" stroke="#409eff" stroke-width="1.6"><path d="M1 8.5Q6.5 1 12.5 1T24 8.5Q18.5 16 12.5 16T1 8.5Z"/><circle cx="12.5" cy="8.5" r="3.8"/></g></svg>
<div class="t" style="left:2017px;top:1373px;font-size:24px;line-height:32px;color:#409eff">查看Api</div>

<!-- ===== PROPERTIES ===== -->
<div class="t" style="left:2296px;top:294px;font-size:28px;line-height:36px;font-weight:700;color:#606266">组件</div>
<div class="a" style="left:2668px;top:300px;width:28px;height:28px;border-radius:4px;background:#409eff"></div>
<svg style="left:2673px;top:306px" width="18" height="16"><path d="M1.5 8L6.5 13L16.5 2" fill="none" stroke="#fff" stroke-width="2.2"/></svg>
<div class="t" style="left:2704px;top:294px;font-size:28px;line-height:36px;font-weight:700;color:#606266">允许多选</div>
<div class="a" style="left:2296px;top:338px;width:520px;height:64px;border:2px solid #dcdfe6;border-radius:9px;background:#fff"></div>
<svg style="left:2318px;top:361px" width="24" height="26" viewBox="0 0 24 26"><g fill="none" stroke="#333" stroke-width="1.7"><circle cx="12" cy="7" r="6"/><path d="M1 25Q1.5 14.5 12 14.5Q15 14.5 17 15.5"/><path d="M18 17.5V25M14.3 21.3H22"/></g></svg>
<div class="t" style="left:2365px;top:354px;font-size:27px;line-height:36px;color:#303133">人员选择</div>
<svg style="left:2771px;top:363px" width="22" height="13"><path d="M1 1L11 11L21 1" fill="none" stroke="#c0c4cc" stroke-width="1.8"/></svg>
<!-- red highlight -->
<div class="a" style="left:2258px;top:303px;width:581px;height:94px;border:6px solid #fe1a10;border-radius:6px"></div>

<!-- 字段 -->
<div class="t" style="left:2296px;top:439px;font-size:28px;line-height:36px;font-weight:700;color:#606266">字段</div>
<svg style="left:2790px;top:444px" width="24" height="24" viewBox="0 0 24 24"><g fill="none" stroke="#409eff" stroke-width="1.9"><path d="M3 10.5A9 9 0 0 1 19.5 6"/><path d="M21 13.5A9 9 0 0 1 4.5 18"/></g><path d="M21.5 1.5V8H15Z" fill="#409eff"/><path d="M2.5 22.5V16H9Z" fill="#409eff"/></svg>
<div class="a" style="left:2296px;top:482px;width:520px;height:64px;border:2px solid #dcdfe6;border-radius:9px;background:#fff"></div>
<div class="t" style="left:2317px;top:500px;font-size:21px;line-height:32px;font-weight:700;color:#1a237e">Aa</div>
<div class="t" style="left:2359px;top:497px;font-size:26px;line-height:36px;color:#f26b0f"><span style="font-weight:700">人员</span><span style="-webkit-text-stroke:0.6px #f26b0f">(person)</span></div>
<svg style="left:2780px;top:507px" width="22" height="13"><path d="M1 1L11 11L21 1" fill="none" stroke="#c0c4cc" stroke-width="1.8"/></svg>

<!-- 标题 -->
<div class="t" style="left:2296px;top:584px;font-size:28px;line-height:36px;font-weight:700;color:#606266">标题</div>
<div class="a" style="left:2668px;top:588px;width:28px;height:28px;border-radius:4px;background:#409eff"></div>
<svg style="left:2673px;top:594px" width="18" height="16"><path d="M1.5 8L6.5 13L16.5 2" fill="none" stroke="#fff" stroke-width="2.2"/></svg>
<div class="t" style="left:2704px;top:584px;font-size:28px;line-height:36px;font-weight:700;color:#606266">显示标签</div>
<div class="a" style="left:2296px;top:626px;width:520px;height:64px;border:2px solid #dcdfe6;border-radius:9px;background:#fff;overflow:hidden"><div class="a" style="left:468px;top:0;width:50px;height:60px;background:#f5f5f7;border-left:2px solid #dcdfe6"></div></div>
<div class="t" style="left:2317px;top:642px;font-size:27px;line-height:36px;color:#303133">人员</div>
<div class="t" style="left:2783px;top:641px;font-size:24px;line-height:32px;color:#606266">V</div>

<!-- 默认值 -->
<div class="t" style="left:2296px;top:727px;font-size:28px;line-height:36px;font-weight:700;color:#606266">默认值</div>
<div class="a" style="left:2668px;top:731px;width:28px;height:28px;border-radius:4px;border:2px solid #dcdfe6;background:#fff"></div>
<div class="t" style="left:2704px;top:727px;font-size:28px;line-height:36px;font-weight:700;color:#606266">当前员工</div>
<div class="a" style="left:2296px;top:770px;width:520px;height:64px;border:2px solid #dcdfe6;border-radius:9px;background:#fff;overflow:hidden"><div class="a" style="left:466px;top:0;width:52px;height:60px;background:#f5f5f7;border-left:2px solid #dcdfe6"></div></div>
<div class="t" style="left:2314px;top:786px;font-size:25px;line-height:32px;font-weight:700;color:#0d1452">Aa</div>
<div class="t" style="left:2782px;top:786px;font-size:25px;line-height:32px;color:#606266">D</div>

<!-- 展示模式 -->
<div class="t" style="left:2296px;top:872px;font-size:28px;line-height:36px;font-weight:700;color:#606266">展示模式</div>
<div class="a" style="left:2668px;top:876px;width:28px;height:28px;border-radius:4px;border:2px solid #dcdfe6;background:#fff"></div>
<div class="t" style="left:2704px;top:872px;font-size:28px;line-height:36px;font-weight:700;color:#606266">滚动加载</div>
<div class="a" style="left:2296px;top:915px;width:112px;height:64px;border:2px solid #dcdfe6;border-right:none;border-radius:9px 0 0 9px;background:#fff"></div>
<div class="t" style="left:2328px;top:931px;font-size:25px;line-height:32px;color:#606266">按钮</div>
<div class="a" style="left:2406px;top:915px;width:160px;height:64px;border-radius:0 9px 9px 0;background:#409eff"></div>
<div class="t" style="left:2437px;top:931px;font-size:25px;line-height:32px;color:#fff">搜索选择</div>

<!-- 范围选择 -->
<div class="t" style="left:2296px;top:1015px;font-size:28px;line-height:36px;font-weight:700;color:#606266">范围选择</div>
<div class="a" style="left:2776px;top:1005px;width:40px;height:40px;border-radius:20px;border:2px solid #c9ccd2;background:#fff"></div>
<svg style="left:2786px;top:1015px" width="20" height="20"><path d="M10 0V20M0 10H20" stroke="#409eff" stroke-width="1.6"/></svg>
<div class="a" style="left:2296px;top:1059px;width:520px;height:60px;border:2px solid #dcdfe6;background:#fff"></div>
<div class="t" style="left:2337px;top:1073px;font-size:27px;line-height:36px;color:#303133">所有</div>

<!-- 组件宽度 -->
<div class="t" style="left:2296px;top:1155px;font-size:28px;line-height:36px;font-weight:700;color:#606266">组件宽度</div>
<div class="a" style="left:2276px;top:1190px;width:560px;height:48px;overflow:hidden">
 <div class="a" style="left:20px;top:9px;width:497px;height:70px;border:2px solid #dcdfe6;border-radius:9px;background:#fff"></div>
 <div class="a" style="left:101px;top:9px;width:2px;height:60px;background:#dcdfe6"></div>
 <div class="a" style="left:183px;top:9px;width:2px;height:60px;background:#dcdfe6"></div>
 <div class="a" style="left:264px;top:9px;width:2px;height:60px;background:#dcdfe6"></div>
 <div class="a" style="left:345px;top:9px;width:2px;height:60px;background:#dcdfe6"></div>
 <div class="a" style="left:429px;top:9px;width:2px;height:60px;background:#dcdfe6"></div>
 <div class="t" style="left:44px;top:28px;font-size:23px;line-height:26px;font-weight:700;color:#606266">1/6</div>
 <div class="t" style="left:126px;top:28px;font-size:23px;line-height:26px;font-weight:700;color:#606266">1/4</div>
 <div class="t" style="left:208px;top:28px;font-size:23px;line-height:26px;font-weight:700;color:#606266">1/3</div>
 <div class="t" style="left:289px;top:28px;font-size:23px;line-height:26px;font-weight:700;color:#606266">1/2</div>
 <div class="t" style="left:372px;top:28px;font-size:23px;line-height:26px;font-weight:700;color:#606266">2/3</div>
 <div class="t" style="left:456px;top:28px;font-size:23px;line-height:26px;font-weight:700;color:#606266">3/4</div>
</div>

<!-- collapses -->
<div class="a" style="left:2276px;top:1248px;width:560px;height:182px;background:#f4f4f4"></div>
<div class="a" style="left:2276px;top:1247px;width:560px;height:2px;background:#e6e9ef"></div>
<div class="a" style="left:2276px;top:1310px;width:560px;height:2px;background:#e6e9ef"></div>
<div class="a" style="left:2276px;top:1372px;width:560px;height:2px;background:#e6e9ef"></div>
<div class="t" style="left:2316px;top:1264px;font-size:26px;line-height:36px;color:#303133">验证</div>
<div class="t" style="left:2316px;top:1326px;font-size:26px;line-height:36px;color:#303133">高级</div>
<div class="t" style="left:2316px;top:1386px;font-size:26px;line-height:36px;color:#303133">样式</div>
<svg style="left:2802px;top:1270px" width="11" height="20"><path d="M1 1L10 10L1 19" fill="none" stroke="#333" stroke-width="1.7"/></svg>
<svg style="left:2802px;top:1332px" width="11" height="20"><path d="M1 1L10 10L1 19" fill="none" stroke="#333" stroke-width="1.7"/></svg>
<svg style="left:2802px;top:1393px" width="11" height="20"><path d="M1 1L10 10L1 19" fill="none" stroke="#333" stroke-width="1.7"/></svg>

<!-- ===== BOTTOM ===== -->
<div class="a" style="left:44px;top:1430px;width:2793px;height:2px;background:#c8c8c8"></div>
<div class="a" style="left:0;top:1480px;width:2879px;height:2px;background:#9a9a9a"></div>

<!-- right strip text -->
<div class="a" style="left:2839px;top:217px;width:40px;height:2px;background:#c8c8c8"></div>
<div class="a" style="left:2839px;top:411px;width:40px;height:2px;background:#c8c8c8"></div>
<div class="a" style="left:2839px;top:606px;width:40px;height:2px;background:#c8c8c8"></div>
<div class="a" style="left:2839px;top:820px;width:40px;height:2px;background:#c8c8c8"></div>
<div class="a" style="left:2845px;top:72px;width:26px;font-size:24px;line-height:32px;word-break:break-all;color:#000">数据源</div>
<div class="a" style="left:2845px;top:233px;width:26px;font-size:24px;line-height:32px;word-break:break-all;color:#000">离线资源</div>
<div class="a" style="left:2845px;top:428px;width:26px;font-size:24px;line-height:32px;word-break:break-all;color:#000">三方服务</div>
<div class="a" style="left:2845px;top:621px;width:26px;font-size:24px;line-height:32px;word-break:break-all;color:#000">命名</div><div class="t" style="left:2850px;top:682px;font-size:24px;line-height:28px;color:#000">S</div><div class="t" style="left:2851px;top:711px;font-size:24px;line-height:28px;color:#000">q</div><div class="t" style="left:2855px;top:739px;font-size:24px;line-height:28px;color:#000">l</div>

<!-- bottom tabs -->
<svg style="left:55px;top:1435px" width="50" height="43" viewBox="0 0 50 43"><g fill="none" stroke="#666" stroke-width="1.9"><path d="M20 14.5L23.5 10H26.5L30 14.5"/><path d="M17 15.5H33"/><path d="M15.5 17V26.5Q16.5 31 23 34"/><path d="M25 15.5V21.5L23.5 24"/><path d="M34.5 17V21.5"/><path d="M11 16.5L15 20.5M38.5 16.5L34.5 20.5M11.5 31.5L15.5 27.5"/><path d="M26.5 24.5H39M26.5 29H39M26.5 33.5H39" stroke-width="2"/></g></svg>
<div class="t" style="left:107px;top:1440px;font-size:24px;line-height:32px;color:#000">调试信息</div>
<svg style="left:246px;top:1445px" width="28" height="22" viewBox="0 0 28 22"><g fill="#6e6e6e"><rect x="0" y="1" width="4" height="4"/><rect x="0" y="9" width="4" height="4"/><rect x="0" y="17" width="4" height="4"/><rect x="7.5" y="1" width="20.5" height="4"/><rect x="7.5" y="9" width="20.5" height="4"/><rect x="7.5" y="17" width="20.5" height="4"/></g></svg>
<div class="t" style="left:292px;top:1440px;font-size:24px;line-height:32px;color:#000">问题</div>
<div class="a" style="left:319px;top:1415px;width:55px;height:36px;border-radius:18px;background:#f56c6c;border:2px solid #fff"></div>
<div class="t" style="left:320px;top:1417px;width:54px;text-align:center;font-size:24px;line-height:32px;color:#fff">67</div>

<!-- status bar -->
<div class="t" style="left:39px;top:1489px;font-size:24px;line-height:32px;color:#000">查看资源「xfStudent」详情</div>
<div class="a" style="left:2410px;top:1492px;width:21px;height:21px;border-radius:11px;background:#5aa864"></div>
<div class="t" style="left:2437px;top:1489px;font-size:24px;line-height:32px;color:#000">资源发生变更，点击查看,检查时间:14:23</div>

<div class="a" style="left:0;top:1528px;width:2879px;height:1px;background:#fdfdfd"></div>
</body></html>
